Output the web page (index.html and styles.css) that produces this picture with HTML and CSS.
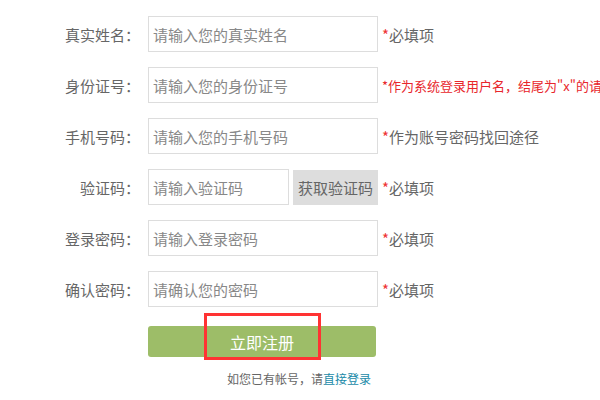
FILE: index.html
```html
<!DOCTYPE html>
<html lang="zh-CN">
<head>
  <meta charset="UTF-8"/>
  <title>用户注册</title>
  <link rel="stylesheet" href="styles.css">
</head>
<body>

  <form class="reg-form">
    <div class="form-row">
      <label class="form-label">真实姓名：</label>
      <input class="form-input" type="text" placeholder="请输入您的真实姓名">
      <span class="form-tip"><i class="star">*</i>必填项</span>
    </div>

    <div class="form-row">
      <label class="form-label">身份证号：</label>
      <input class="form-input" type="text" placeholder="请输入您的身份证号">
      <span class="form-tip form-tip-red">*作为系统登录用户名，结尾为"x"的请</span>
    </div>

    <div class="form-row">
      <label class="form-label">手机号码：</label>
      <input class="form-input" type="text" placeholder="请输入您的手机号码">
      <span class="form-tip"><i class="star">*</i>作为账号密码找回途径</span>
    </div>

    <div class="form-row">
      <label class="form-label">验证码：</label>
      <input class="form-input code-input" type="text" placeholder="请输入验证码">
      <button class="code-btn" type="button">获取验证码</button>
      <span class="form-tip"><i class="star">*</i>必填项</span>
    </div>

    <div class="form-row">
      <label class="form-label">登录密码：</label>
      <input class="form-input" type="password" placeholder="请输入登录密码">
      <span class="form-tip"><i class="star">*</i>必填项</span>
    </div>

    <div class="form-row">
      <label class="form-label">确认密码：</label>
      <input class="form-input" type="password" placeholder="请确认您的密码">
      <span class="form-tip"><i class="star">*</i>必填项</span>
    </div>

    <div class="submit-row">
      <button class="submit-btn" type="button">立即注册</button>
      <span class="mark-box"></span>
    </div>

    <p class="login-tip">如您已有帐号，请<a href="#">直接登录</a></p>
  </form>

</body>
</html>
```

FILE: styles.css
```css
body {
  margin: 0;
  font-family: "Noto Sans CJK SC", "Noto Sans", sans-serif;
  background: #fff;
  color: #666;
  overflow: hidden;
}

.reg-form {
  padding-top: 16px;
  width: 600px;
}

.form-row {
  display: flex;
  align-items: center;
  height: 36px;
  margin-bottom: 15px;
  white-space: nowrap;
}

.form-label {
  width: 140px;
  text-align: right;
  font-size: 15px;
  color: #666;
  margin-right: 8px;
  flex-shrink: 0;
}

.form-input {
  box-sizing: border-box;
  width: 230px;
  height: 36px;
  border: 1px solid #ddd;
  padding: 0 4px;
  font-family: inherit;
  font-size: 15px;
  color: #333;
  outline: none;
  flex-shrink: 0;
}

.form-input::placeholder {
  color: #888;
}

.code-input {
  width: 141px;
}

.code-btn {
  box-sizing: border-box;
  width: 85px;
  height: 35px;
  margin-left: 4px;
  border: none;
  background: #ddd;
  color: #666;
  font-family: inherit;
  font-size: 15px;
  padding: 0;
  flex-shrink: 0;
}

.form-tip {
  margin-left: 4px;
  font-size: 15px;
  color: #666;
}

.star {
  font-style: normal;
  color: #e33;
}

.form-tip-red {
  color: #e8262b;
  font-size: 13px;
}

.submit-row {
  position: relative;
  margin-top: 19px;
  padding-left: 148px;
}

.submit-btn {
  width: 228px;
  height: 31px;
  border: none;
  border-radius: 3px;
  background: #9dbd68;
  color: #fff;
  font-family: inherit;
  font-size: 16px;
  padding: 0;
}

.mark-box {
  position: absolute;
  left: 204px;
  top: -13px;
  width: 111px;
  height: 41px;
  border: 3px solid #f33;
}

.login-tip {
  margin: 13px 0 0 227px;
  font-size: 12px;
  color: #666;
}

.login-tip a {
  color: #1a8aa8;
  text-decoration: none;
}
```
